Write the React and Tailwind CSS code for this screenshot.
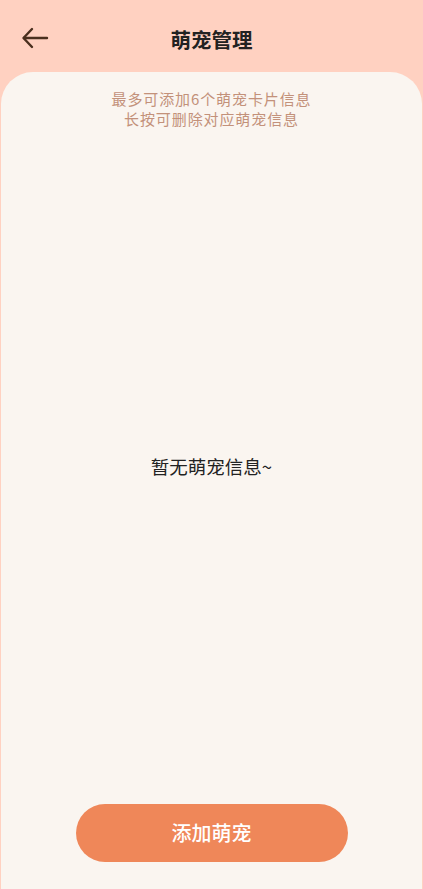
export default function App() {
  return (
    <div
      className="w-[423px] h-[889px] bg-[#ffd1c1] flex flex-col overflow-hidden"
      style={{ fontFamily: '"Noto Sans CJK SC", "Noto Sans", sans-serif' }}
    >
      <div className="h-[72px] relative flex items-center justify-center shrink-0">
        <button className="absolute left-[20px] top-[24px] w-[30px] h-[28px] flex items-center justify-center">
          <svg width="28" height="22" viewBox="0 0 28 22" fill="none" stroke="#4a2f1e" strokeWidth="2.4" strokeLinecap="round" strokeLinejoin="round">
            <path d="M26 11H3" />
            <path d="M11 2L2.5 11L11 20" />
          </svg>
        </button>
        <h1 className="text-[20.5px] font-semibold text-[#222] mt-[6px]">萌宠管理</h1>
      </div>
      <div className="flex-1 ml-[1px] mr-[1px] bg-[#faf5f0] rounded-t-[32px] flex flex-col items-center">
        <div className="pt-[18px] flex flex-col gap-[3px] text-[15px] leading-[17px] text-[#c3917a] text-center tracking-[0.9px]">
          <p>最多可添加6个萌宠卡片信息</p>
          <p>长按可删除对应萌宠信息</p>
        </div>
        <div className="flex-1 flex items-center justify-center pt-[2px]">
          <p className="text-[18.5px] text-[#222]">暂无萌宠信息~</p>
        </div>
        <button className="mb-[27px] w-[272px] h-[58px] rounded-full bg-[#ef8759] text-white text-[20px] font-medium">
          添加萌宠
        </button>
      </div>
    </div>
  );
}
